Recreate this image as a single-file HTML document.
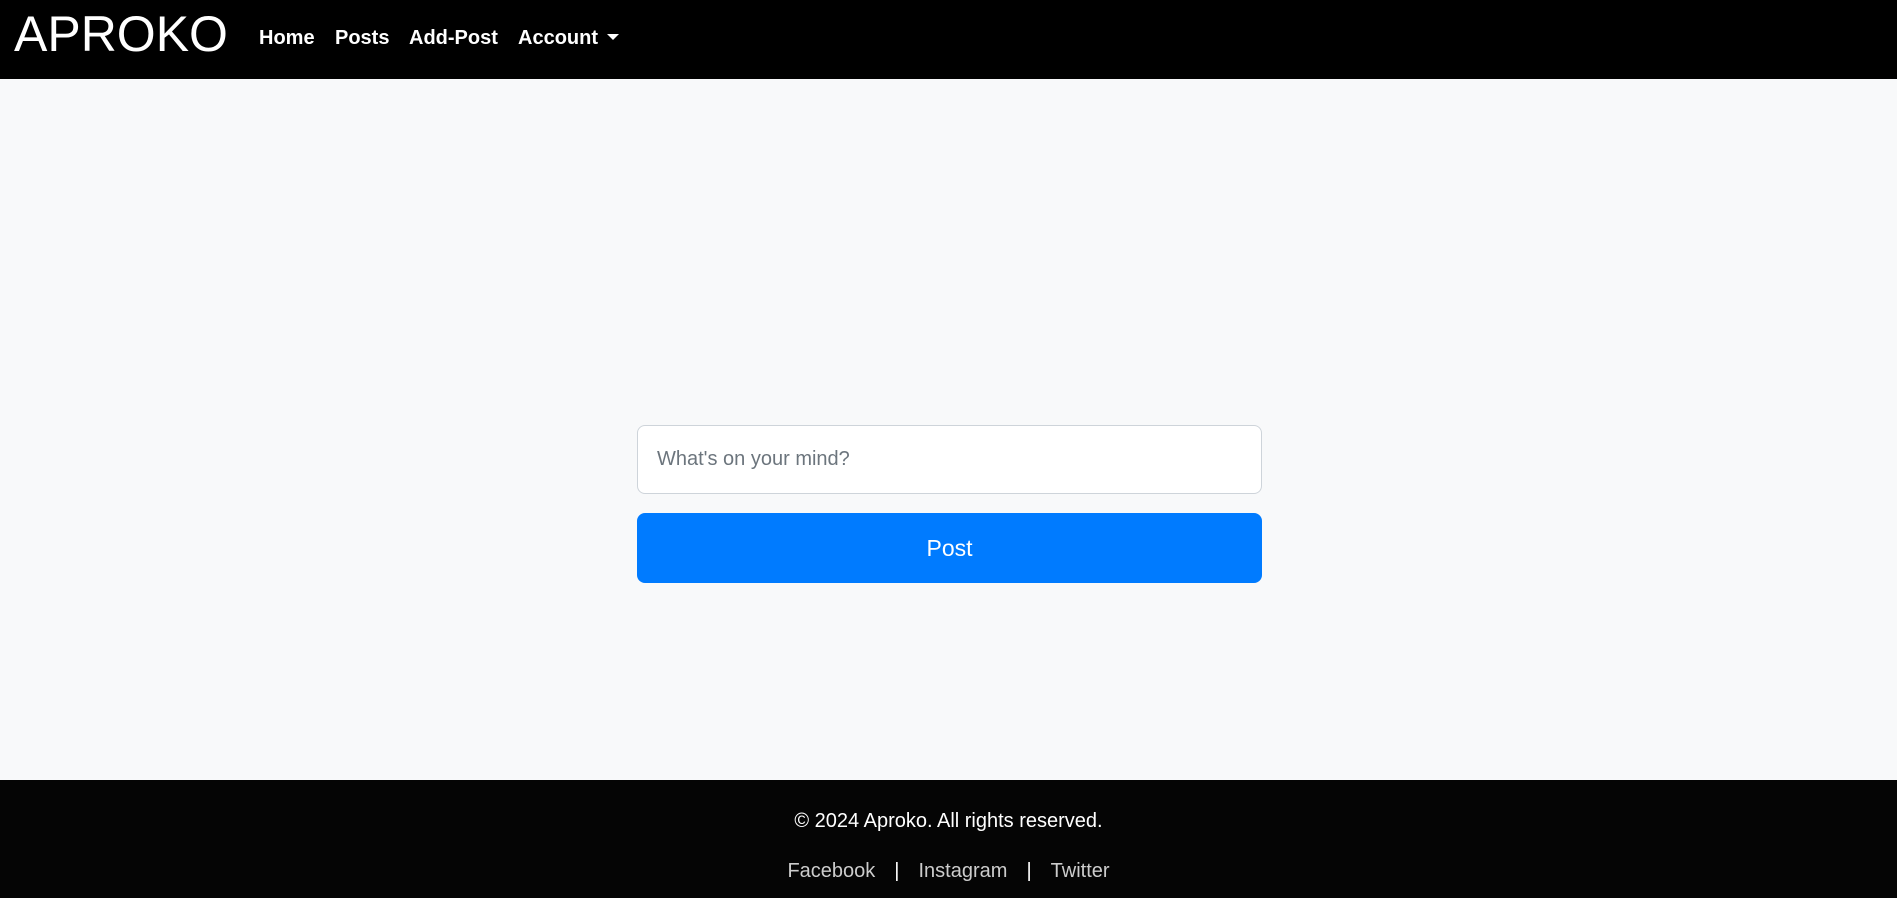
<!DOCTYPE html>
<html><head><style>
*{box-sizing:border-box;margin:0;padding:0}
body{width:1897px;height:898px;background:#f8f9fa;font-family:"Liberation Sans",Arial,sans-serif;position:relative;overflow:hidden}
nav{position:absolute;left:0;top:0;width:1897px;height:79px;background:#000}
.brand{position:absolute;left:14px;top:8px;font-size:50px;color:#fff;line-height:52px}
.nl{position:absolute;top:26px;font-size:20px;font-weight:bold;color:#fff;line-height:24px}
.caret{display:inline-block;width:0;height:0;border-left:6px solid transparent;border-right:6px solid transparent;border-top:6px solid #fff;vertical-align:4px;margin-left:9px}
.inp{position:absolute;left:637px;top:425px;width:625px;height:69px;background:#fff;border:1px solid #ced4da;border-radius:8px;padding-left:19px;line-height:67px;font-size:20px;color:#6c757d}
.btn{position:absolute;left:637px;top:513px;width:625px;height:70px;background:#007bff;border-radius:8px;color:#fff;font-size:23px;text-align:center;line-height:70px}
footer{position:absolute;left:0;top:780px;width:1897px;height:118px;background:#050505;color:#fff;text-align:center;font-size:20px}
.c{position:absolute;left:0;width:100%;top:30px}
.l{position:absolute;left:0;width:100%;top:80px;color:#ccc}
.l span{color:#fff;margin:0 19px}
</style></head><body>
<nav>
<div class="brand">APROKO</div>
<div class="nl" style="left:259px">Home</div>
<div class="nl" style="left:335px">Posts</div>
<div class="nl" style="left:409px">Add-Post</div>
<div class="nl" style="left:518px">Account<span class="caret"></span></div>
</nav>
<div class="inp">What's on your mind?</div>
<div class="btn">Post</div>
<footer>
<div class="c">© 2024 Aproko. All rights reserved.</div>
<div class="l">Facebook<span>|</span>Instagram<span>|</span>Twitter</div>
</footer>
</body></html>
